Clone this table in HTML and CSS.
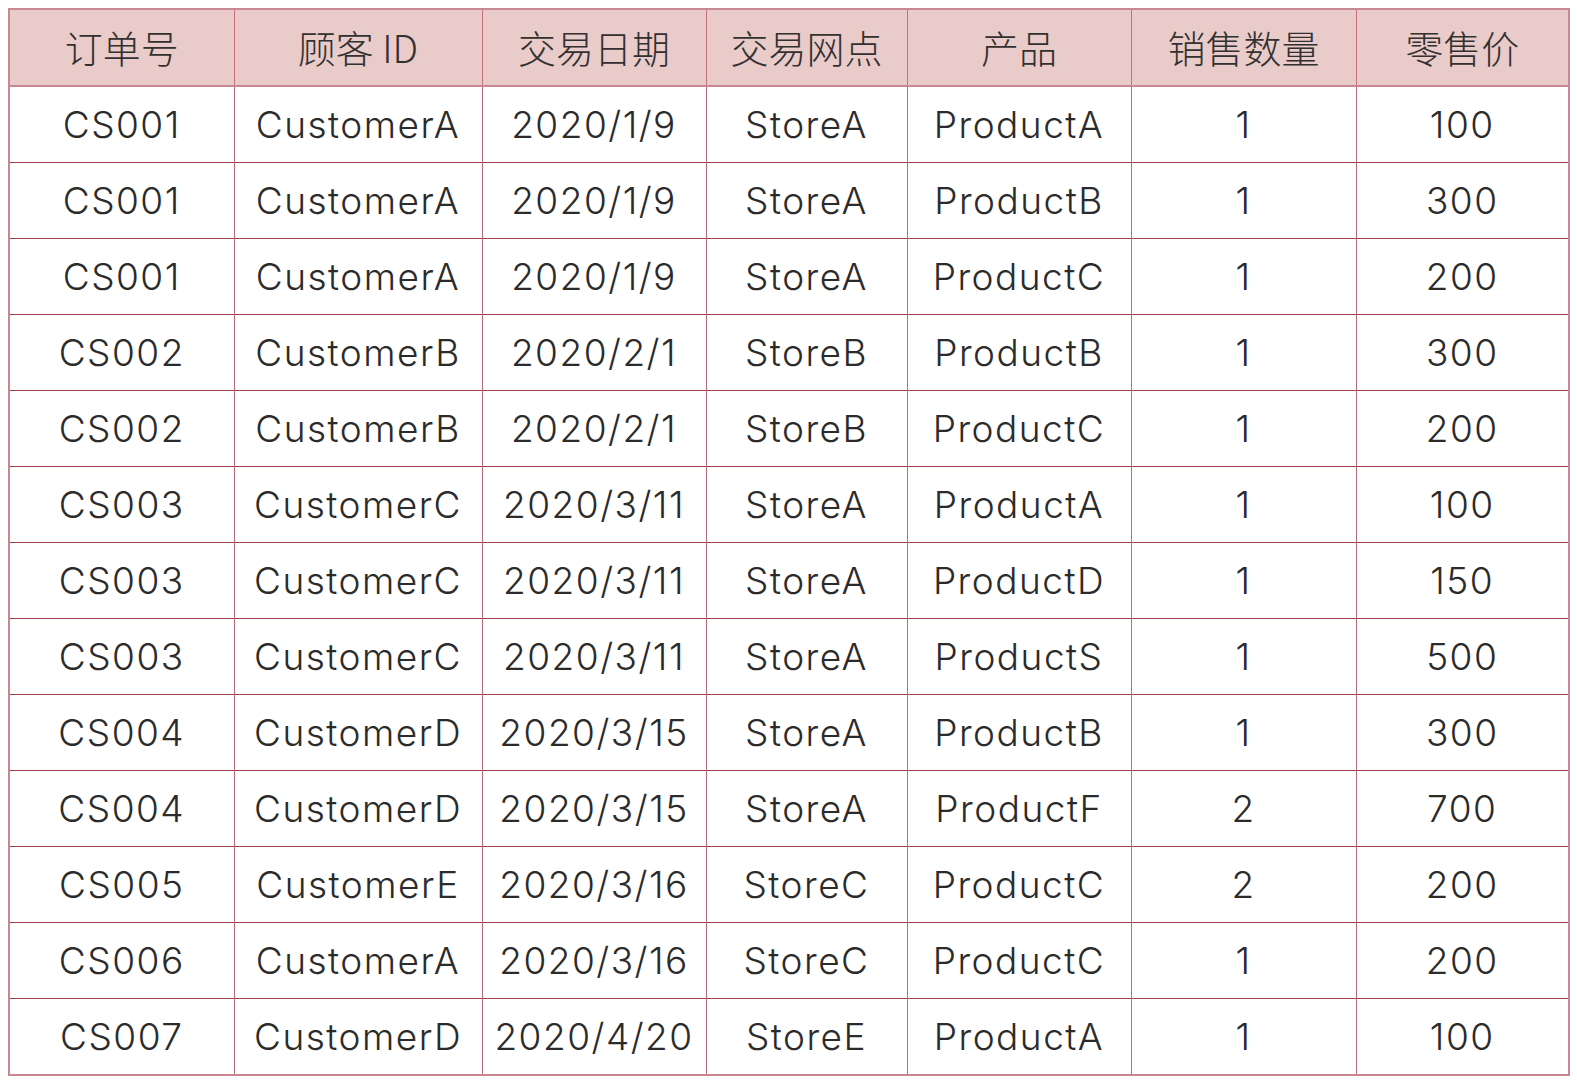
FILE: index.html
```html
<!DOCTYPE html>
<html lang="zh">
<head>
<meta charset="utf-8">
<link rel="stylesheet" href="styles.css">
</head>
<body>
<table class="sales">
  <colgroup>
    <col class="c1"><col class="c2"><col class="c3"><col class="c4"><col class="c5"><col class="c6"><col class="c7">
  </colgroup>
  <thead>
    <tr><th>订单号</th><th>顾客 ID</th><th>交易日期</th><th>交易网点</th><th>产品</th><th>销售数量</th><th>零售价</th></tr>
  </thead>
  <tbody>
    <tr><td>CS001</td><td>CustomerA</td><td>2020/1/9</td><td>StoreA</td><td>ProductA</td><td>1</td><td>100</td></tr>
    <tr><td>CS001</td><td>CustomerA</td><td>2020/1/9</td><td>StoreA</td><td>ProductB</td><td>1</td><td>300</td></tr>
    <tr><td>CS001</td><td>CustomerA</td><td>2020/1/9</td><td>StoreA</td><td>ProductC</td><td>1</td><td>200</td></tr>
    <tr><td>CS002</td><td>CustomerB</td><td>2020/2/1</td><td>StoreB</td><td>ProductB</td><td>1</td><td>300</td></tr>
    <tr><td>CS002</td><td>CustomerB</td><td>2020/2/1</td><td>StoreB</td><td>ProductC</td><td>1</td><td>200</td></tr>
    <tr><td>CS003</td><td>CustomerC</td><td>2020/3/11</td><td>StoreA</td><td>ProductA</td><td>1</td><td>100</td></tr>
    <tr><td>CS003</td><td>CustomerC</td><td>2020/3/11</td><td>StoreA</td><td>ProductD</td><td>1</td><td>150</td></tr>
    <tr><td>CS003</td><td>CustomerC</td><td>2020/3/11</td><td>StoreA</td><td>ProductS</td><td>1</td><td>500</td></tr>
    <tr><td>CS004</td><td>CustomerD</td><td>2020/3/15</td><td>StoreA</td><td>ProductB</td><td>1</td><td>300</td></tr>
    <tr><td>CS004</td><td>CustomerD</td><td>2020/3/15</td><td>StoreA</td><td>ProductF</td><td>2</td><td>700</td></tr>
    <tr><td>CS005</td><td>CustomerE</td><td>2020/3/16</td><td>StoreC</td><td>ProductC</td><td>2</td><td>200</td></tr>
    <tr><td>CS006</td><td>CustomerA</td><td>2020/3/16</td><td>StoreC</td><td>ProductC</td><td>1</td><td>200</td></tr>
    <tr><td>CS007</td><td>CustomerD</td><td>2020/4/20</td><td>StoreE</td><td>ProductA</td><td>1</td><td>100</td></tr>
  </tbody>
</table>
</body>
</html>
```

FILE: styles.css
```css
html, body {
  margin: 0;
  padding: 0;
  background: #ffffff;
}

body {
  padding: 8px 0 0 8px;
}

.sales {
  border-collapse: collapse;
  table-layout: fixed;
  width: 1560px;
  border: 2px solid #c98891;
  font-family: Inter, "Noto Sans CJK SC", sans-serif;
  font-weight: 300;
  color: #2b2b2b;
}

.c1 { width: 225px; }
.c2 { width: 248px; }
.c3 { width: 224px; }
.c4 { width: 201px; }
.c5 { width: 224px; }
.c6 { width: 225px; }
.c7 { width: 213px; }

.sales th,
.sales td {
  padding: 0;
  text-align: center;
  vertical-align: middle;
  white-space: nowrap;
  overflow: hidden;
}

.sales thead th {
  height: 72px;
  padding-bottom: 3px;
  background: #e9cbca;
  font-family: "Noto Sans CJK SC", sans-serif;
  font-weight: 300;
  font-size: 38px;
  color: #333030;
  border-left: 1px solid #c7737f;
  border-bottom: 2px solid #c98891;
}

.sales tbody td {
  height: 75px;
  font-size: 37px;
  letter-spacing: 1.5px;
  border-left: 1px solid #b86c78;
  border-top: 1px solid #9e3e4e;
}

.sales tbody tr:first-child td {
  border-top: 2px solid #c98891;
}

.sales th:first-child,
.sales td:first-child {
  border-left: 2px solid #c98891;
}
```
